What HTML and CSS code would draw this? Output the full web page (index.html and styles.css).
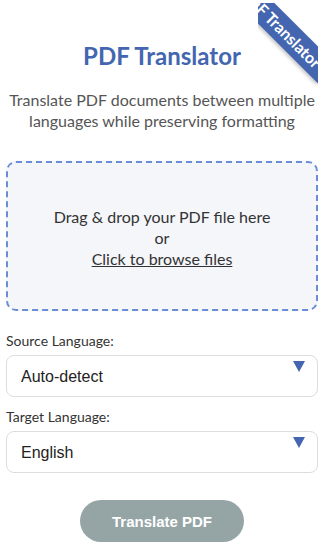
FILE: index.html
```html
<!DOCTYPE html>
<html lang="en">
<head>
  <meta charset="UTF-8" />
  <meta name="viewport" content="width=device-width, initial-scale=1.0"/>
  <title>PDF Translator</title>
  <link rel="stylesheet" href="styles.css">
</head>
<body>
  <div class="app">
    <div class="ribbon-box">
      <div class="ribbon">PDF Translator</div>
    </div>

    <h1>PDF Translator</h1>
    <p class="subtitle">Translate PDF documents between multiple languages while preserving formatting</p>

    <!-- Upload area -->
    <div class="drop-zone" id="dropZone">
      <p>Drag &amp; drop your PDF file here</p>
      <p>or</p>
      <p><a href="#" class="browse">Click to browse files</a></p>
    </div>

    <div class="form-group first">
      <label for="source">Source Language:</label>
      <div class="select-wrap">
        <select id="source">
          <option>Auto-detect</option>
          <option>English</option>
          <option>Spanish</option>
          <option>French</option>
          <option>German</option>
        </select>
      </div>
    </div>

    <div class="form-group">
      <label for="target">Target Language:</label>
      <div class="select-wrap">
        <select id="target">
          <option>English</option>
          <option>Spanish</option>
          <option>French</option>
          <option>German</option>
        </select>
      </div>
    </div>

    <div class="actions">
      <button class="btn-translate" disabled>Translate PDF</button>
    </div>
  </div>
</body>
</html>
```

FILE: styles.css
```css
* {
  box-sizing: border-box;
  margin: 0;
  padding: 0;
}

body {
  font-family: 'Lato', sans-serif;
  background: #fff;
  color: #333;
}

.app {
  position: relative;
  margin-left: 6px;
  width: 312px;
  padding-top: 41px;
  padding-bottom: 20px;
}

/* corner ribbon */
.ribbon-box {
  position: absolute;
  top: 3px;
  right: 0;
  width: 60px;
  height: 95px;
  overflow: hidden;
}

.ribbon {
  position: absolute;
  top: 12px;
  left: -42px;
  width: 130px;
  line-height: 26px;
  background: #4466b0;
  color: #fff;
  font-size: 16px;
  font-weight: bold;
  text-align: center;
  white-space: nowrap;
  transform: rotate(45deg);
  box-shadow: 0 2px 4px rgba(0, 0, 0, 0.25);
}

h1 {
  font-size: 24px;
  line-height: 30px;
  color: #4466b0;
  text-align: center;
}

.subtitle {
  font-size: 16px;
  line-height: 21px;
  color: #555;
  text-align: center;
  margin-top: 18px;
}

.drop-zone {
  margin-top: 30px;
  height: 150px;
  border: 2px dashed #6b8dd6;
  border-radius: 10px;
  background: #f5f6fa;
  display: flex;
  flex-direction: column;
  justify-content: center;
  align-items: center;
  padding-top: 2px;
  font-size: 16px;
  line-height: 21px;
  color: #333;
}

.browse {
  color: #333;
  text-decoration: underline;
}

.form-group {
  margin-top: 10px;
}

.form-group.first {
  margin-top: 20px;
}

.form-group label {
  display: block;
  font-size: 14px;
  line-height: 20px;
  margin-bottom: 4px;
  color: #333;
}

.select-wrap {
  position: relative;
}

.select-wrap::after {
  content: "";
  position: absolute;
  top: 6px;
  right: 13px;
  border-left: 6.5px solid transparent;
  border-right: 6.5px solid transparent;
  border-top: 11px solid #4466b0;
  pointer-events: none;
}

.select-wrap select {
  width: 100%;
  height: 42px;
  padding: 0 14px;
  border: 1px solid #ddd;
  border-radius: 8px;
  background: #fff;
  font-family: 'Liberation Sans', Arial, sans-serif;
  font-size: 16px;
  color: #222;
  appearance: none;
  -webkit-appearance: none;
}

.actions {
  display: flex;
  justify-content: center;
  margin-top: 27px;
}

.btn-translate {
  width: 164px;
  height: 42px;
  border: none;
  border-radius: 21px;
  background: #95a5a6;
  color: #fff;
  font-family: 'Liberation Sans', Arial, sans-serif;
  font-size: 15px;
  font-weight: bold;
}
```
